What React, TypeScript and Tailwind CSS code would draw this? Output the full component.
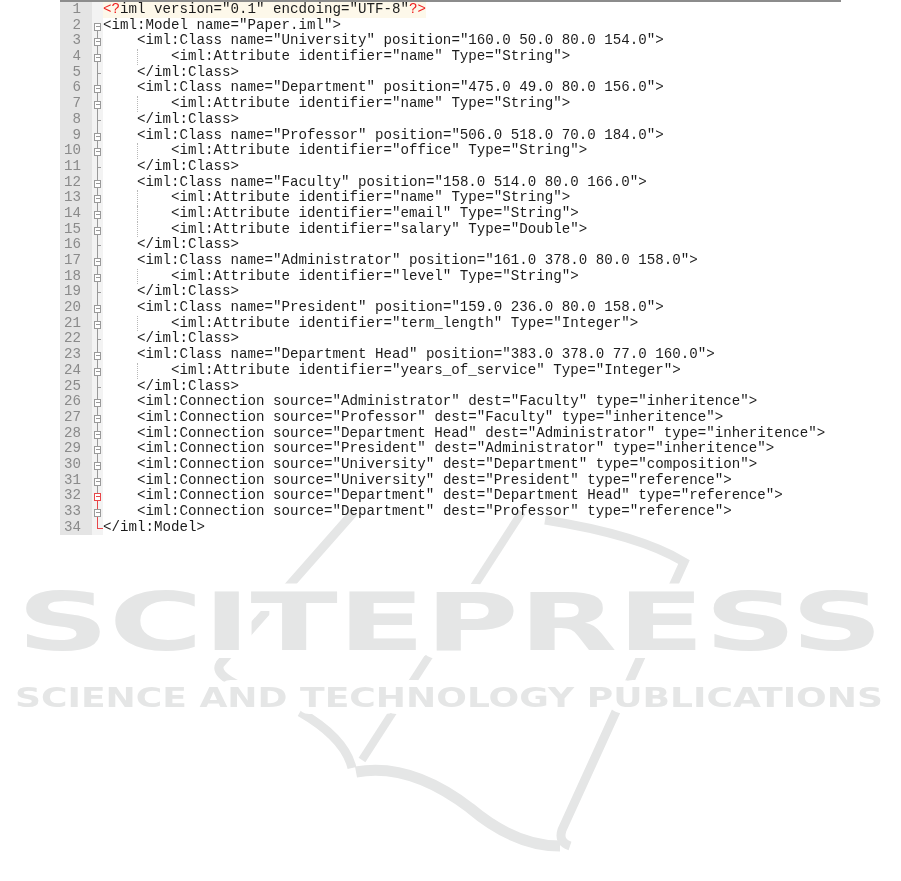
import React from "react";

const LINES: string[] = [
  '<?iml version="0.1" encdoing="UTF-8"?>',
  '<iml:Model name="Paper.iml">',
  '\t<iml:Class name="University" position="160.0 50.0 80.0 154.0">',
  '\t\t<iml:Attribute identifier="name" Type="String">',
  '\t</iml:Class>',
  '\t<iml:Class name="Department" position="475.0 49.0 80.0 156.0">',
  '\t\t<iml:Attribute identifier="name" Type="String">',
  '\t</iml:Class>',
  '\t<iml:Class name="Professor" position="506.0 518.0 70.0 184.0">',
  '\t\t<iml:Attribute identifier="office" Type="String">',
  '\t</iml:Class>',
  '\t<iml:Class name="Faculty" position="158.0 514.0 80.0 166.0">',
  '\t\t<iml:Attribute identifier="name" Type="String">',
  '\t\t<iml:Attribute identifier="email" Type="String">',
  '\t\t<iml:Attribute identifier="salary" Type="Double">',
  '\t</iml:Class>',
  '\t<iml:Class name="Administrator" position="161.0 378.0 80.0 158.0">',
  '\t\t<iml:Attribute identifier="level" Type="String">',
  '\t</iml:Class>',
  '\t<iml:Class name="President" position="159.0 236.0 80.0 158.0">',
  '\t\t<iml:Attribute identifier="term_length" Type="Integer">',
  '\t</iml:Class>',
  '\t<iml:Class name="Department Head" position="383.0 378.0 77.0 160.0">',
  '\t\t<iml:Attribute identifier="years_of_service" Type="Integer">',
  '\t</iml:Class>',
  '\t<iml:Connection source="Administrator" dest="Faculty" type="inheritence">',
  '\t<iml:Connection source="Professor" dest="Faculty" type="inheritence">',
  '\t<iml:Connection source="Department Head" dest="Administrator" type="inheritence">',
  '\t<iml:Connection source="President" dest="Administrator" type="inheritence">',
  '\t<iml:Connection source="University" dest="Department" type="composition">',
  '\t<iml:Connection source="University" dest="President" type="reference">',
  '\t<iml:Connection source="Department" dest="Department Head" type="reference">',
  '\t<iml:Connection source="Department" dest="Professor" type="reference">',
  '</iml:Model>',
];

type Fold = "none" | "start" | "box" | "tick" | "redbox" | "boxred" | "end";

function foldFor(i: number, line: string): Fold {
  const n = i + 1;
  if (n === 1) return "none";
  if (n === 2) return "start";
  if (n === 32) return "redbox";
  if (n === 33) return "boxred";
  if (n === 34) return "end";
  if (line.includes("</")) return "tick";
  return "box";
}

const GRAY = "#9a9a9a";
const RED = "#e8474a";

function FoldMark({ kind }: { kind: Fold }) {
  const h = 16;
  const c = 8.5;
  if (kind === "none") return <svg width="11" height={h} className="block" />;
  const top =
    kind === "start" ? null : (
      <line
        x1="5.5"
        y1="0"
        x2="5.5"
        y2={kind === "end" ? c : kind === "tick" ? h : c - 3.5}
        stroke={kind === "end" || kind === "boxred" ? RED : GRAY}
        strokeWidth="1"
      />
    );
  const bottomColor = kind === "redbox" || kind === "boxred" ? RED : GRAY;
  const bottom =
    kind === "end" || kind === "tick" ? null : (
      <line x1="5.5" y1={c + 3.5} x2="5.5" y2={h} stroke={bottomColor} strokeWidth="1" />
    );
  const isBox = kind === "start" || kind === "box" || kind === "redbox" || kind === "boxred";
  const boxColor = kind === "redbox" ? RED : GRAY;
  return (
    <svg width="11" height={h} className="block" shapeRendering="crispEdges">
      {top}
      {bottom}
      {kind === "tick" && <line x1="5.5" y1={c} x2="9" y2={c} stroke={GRAY} strokeWidth="1" />}
      {kind === "end" && <line x1="5.5" y1={c} x2="11" y2={c} stroke={RED} strokeWidth="1" />}
      {isBox && (
        <g>
          <rect x="2.5" y={c - 3.5} width="6" height="7" fill="#fff" stroke={boxColor} strokeWidth="1" />
          <line x1="3.5" y1={c} x2="7.5" y2={c} stroke={boxColor} strokeWidth="1" />
        </g>
      )}
    </svg>
  );
}

function tokenize(s: string): { t: string; cls: string }[] {
  const out: { t: string; cls: string }[] = [];
  const re = /(<\?|\?>|<\/|<|>|"[^"]*"|=|\s+|[^\s<>="?]+)/g;
  let m: RegExpExecArray | null;
  while ((m = re.exec(s))) {
    const t = m[0];
    let cls = "text-[#1c1c1c]";
    if (t === "<?" || t === "?>") cls = "text-[#f02020]";
    out.push({ t, cls });
  }
  return out;
}

function CodeLine({ line, n }: { line: string; n: number }) {
  const tabs = line.match(/^\t*/)![0].length;
  const rest = line.slice(tabs);
  const toks = tokenize(rest);
  const content = (
    <>
      {toks.map((tk, k) => (
        <span key={k} className={tk.cls}>
          {tk.t}
        </span>
      ))}
    </>
  );
  return (
    <div className="flex h-full items-center whitespace-pre">
      {Array.from({ length: tabs }).map((_, k) => (
        <span
          key={k}
          className={
            k === 1
              ? "inline-block h-full w-[34px] border-l border-dotted border-[#b8b8b8]"
              : "inline-block h-full w-[34px]"
          }
        />
      ))}
      {n === 1 ? <span className="bg-[#fdf8ea]">{content}</span> : content}
    </div>
  );
}

function Watermark() {
  const fill = "#e5e6e6";
  const font = "'DejaVu Sans', 'Liberation Sans', sans-serif";
  return (
    <svg
      className="pointer-events-none absolute left-0 top-0 mix-blend-multiply"
      width="901"
      height="881"
      viewBox="0 0 901 881"
    >
      <defs>
        <mask id="wmMask" maskUnits="userSpaceOnUse" x="0" y="0" width="901" height="881">
          <rect x="0" y="0" width="901" height="881" fill="#fff" />
          <text
            x="17"
            y="650"
            fontFamily={font}
            fontWeight="700"
            fontSize="80"
            textLength="866"
            lengthAdjust="spacingAndGlyphs"
            fill="#000"
            stroke="#000"
            strokeWidth="16"
            strokeLinejoin="round"
          >
            SCITEPRESS
          </text>
          <text
            x="15"
            y="707"
            fontFamily={font}
            fontWeight="700"
            fontSize="26"
            textLength="868"
            lengthAdjust="spacingAndGlyphs"
            fill="#000"
            stroke="#000"
            strokeWidth="14"
            strokeLinejoin="round"
          >
            SCIENCE AND TECHNOLOGY PUBLICATIONS
          </text>
        </mask>
      </defs>
      <g mask="url(#wmMask)" fill="none" stroke={fill} strokeLinecap="butt">
        <path d="M 354 512 L 220 664 Q 214 674 240 686" strokeWidth="9" />
        <path d="M 522 512 L 362 760" strokeWidth="8" />
        <path d="M 545 520 Q 640 535 684 562 L 562 830 Q 558 842 570 846" strokeWidth="9" />
        <path d="M 300 712 Q 345 738 352 768" strokeWidth="9" />
        <path d="M 356 772 Q 410 762 470 808 Q 515 846 560 846" strokeWidth="11" />
      </g>
      <text
        x="17"
        y="650"
        fontFamily={font}
        fontWeight="700"
        fontSize="80"
        textLength="866"
        lengthAdjust="spacingAndGlyphs"
        fill={fill}
      >
        SCITEPRESS
      </text>
      <text
        x="15"
        y="707"
        fontFamily={font}
        fontWeight="700"
        fontSize="26"
        textLength="868"
        lengthAdjust="spacingAndGlyphs"
        fill={fill}
      >
        SCIENCE AND TECHNOLOGY PUBLICATIONS
      </text>
    </svg>
  );
}

export default function App() {
  return (
    <div className="relative h-[881px] w-[901px] overflow-hidden bg-white">
      <div className="ml-[60px] w-[781px] border-t-2 border-[#8c8c8c]">
        {LINES.map((line, i) => (
          <div
            key={i}
            className="flex h-[15.7px] overflow-hidden font-['Liberation_Mono','Courier_New',monospace] text-[14.17px] leading-[15.7px]"
          >
            <div className="w-[32px] shrink-0 bg-[#e4e4e4] pr-[11px] text-right text-[#8a8a8a]">
              {i + 1}
            </div>
            <div className="w-[11px] shrink-0 bg-[#f3f3f3]">
              <FoldMark kind={foldFor(i, line)} />
            </div>
            <div className="min-w-0 flex-1">
              <CodeLine line={line} n={i + 1} />
            </div>
          </div>
        ))}
      </div>
      <Watermark />
    </div>
  );
}
